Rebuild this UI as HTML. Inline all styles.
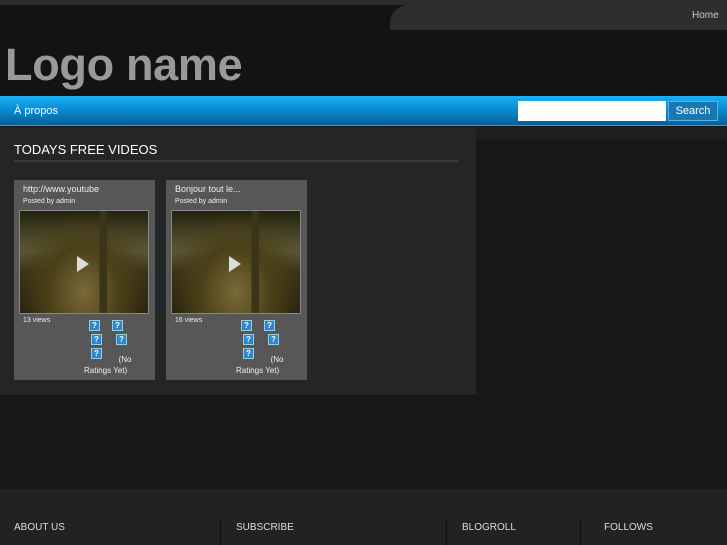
<!DOCTYPE html><html><head><meta charset="utf-8"><style>
*{margin:0;padding:0;box-sizing:border-box}
body{width:727px;height:545px;overflow:hidden;background:#181818;font-family:"Liberation Sans",sans-serif;position:relative}
.a{position:absolute}
.q{position:absolute;width:11px;height:11px;background:#2f86d0;border:1px solid #9cd;color:#fff;font-size:8px;font-weight:bold;text-align:center;line-height:9px}
.img{position:absolute;width:130px;height:104px;border:1px solid #888;background:
linear-gradient(90deg,transparent 0,transparent 62%,#3a3418 62%,#3a3418 68%,transparent 68%),
radial-gradient(ellipse at 50% 80%,#7a6a38 0,#4a4018 40%,transparent 70%),
linear-gradient(#22220e 0,#4a4628 25%,#5a5430 40%,#3a3418 60%,#2a2410 100%)}
.play{position:absolute;left:57px;top:45px;width:0;height:0;border-left:12px solid #ddd;border-top:8px solid transparent;border-bottom:8px solid transparent}
.card{position:absolute;top:180px;width:141px;height:200px;background:#575757;color:#eee}
</style></head><body>
<div class="a" style="left:0;top:0;width:727px;height:5px;background:#2c2c2c"></div>
<div class="a" style="left:0;top:5px;width:727px;height:91px;background:#131313"></div>
<div class="a" style="left:390px;top:5px;width:337px;height:25px;background:#2e2e2e;border-top-left-radius:18px"></div>
<div class="a" style="left:692px;top:10px;font-size:10px;color:#ccc">Home</div>
<div class="a" style="left:5px;top:39px;font-size:45px;font-weight:bold;color:#999;letter-spacing:-0.3px">Logo name</div>
<div class="a" style="left:0;top:96px;width:727px;height:30px;background:linear-gradient(#1ab0f5,#0a88d0 50%,#065f98);border-bottom:1px solid #2aa0e0"></div>
<div class="a" style="left:14px;top:105px;font-size:11px;color:#fff">À propos</div>
<div class="a" style="left:518px;top:101px;width:148px;height:20px;background:#fff"></div>
<div class="a" style="left:668px;top:101px;width:50px;height:20px;background:#1a78b0;border:1px solid #5ab0e0;color:#fff;font-size:11px;text-align:center;line-height:18px">Search</div>
<div class="a" style="left:0;top:127px;width:476px;height:268px;background:#242526"></div>
<div class="a" style="left:476px;top:127px;width:251px;height:13px;background:#1e1e1e"></div>
<div class="a" style="left:14px;top:142px;font-size:13px;color:#fff">TODAYS FREE VIDEOS</div>
<div class="a" style="left:14px;top:160px;width:445px;height:2px;background:#3a3a3a"></div>
<div class="card" style="left:14px">
<div class="a" style="left:9px;top:4px;font-size:9px">http://www.youtube</div>
<div class="a" style="left:9px;top:18px;font-size:7px">Posted by admin</div>
<div class="img" style="left:5px;top:30px"><div class="play"></div></div>
<div class="a" style="left:9px;top:137px;font-size:7px">13 views</div>
<div class="q" style="left:75px;top:140px">?</div><div class="q" style="left:98px;top:140px">?</div>
<div class="q" style="left:77px;top:154px">?</div><div class="q" style="left:102px;top:154px">?</div>
<div class="q" style="left:77px;top:168px">?</div>
<div class="a" style="left:70px;top:174px;width:60px;font-size:8px;line-height:12px;text-align:center;padding-left:22px">(No</div>
<div class="a" style="left:70px;top:186px;font-size:8px">Ratings Yet)</div>
</div>
<div class="card" style="left:166px">
<div class="a" style="left:9px;top:4px;font-size:9px">Bonjour tout le...</div>
<div class="a" style="left:9px;top:18px;font-size:7px">Posted by admin</div>
<div class="img" style="left:5px;top:30px"><div class="play"></div></div>
<div class="a" style="left:9px;top:137px;font-size:7px">16 views</div>
<div class="q" style="left:75px;top:140px">?</div><div class="q" style="left:98px;top:140px">?</div>
<div class="q" style="left:77px;top:154px">?</div><div class="q" style="left:102px;top:154px">?</div>
<div class="q" style="left:77px;top:168px">?</div>
<div class="a" style="left:70px;top:174px;width:60px;font-size:8px;line-height:12px;text-align:center;padding-left:22px">(No</div>
<div class="a" style="left:70px;top:186px;font-size:8px">Ratings Yet)</div>
</div>
<div class="a" style="left:0;top:489px;width:727px;height:56px;background:#222"></div>
<div class="a" style="left:220px;top:520px;width:1px;height:25px;background:#111"></div>
<div class="a" style="left:446px;top:520px;width:1px;height:25px;background:#111"></div>
<div class="a" style="left:580px;top:520px;width:1px;height:25px;background:#111"></div>
<div class="a" style="left:14px;top:522px;font-size:10px;color:#ddd">ABOUT US</div>
<div class="a" style="left:236px;top:522px;font-size:10px;color:#ddd">SUBSCRIBE</div>
<div class="a" style="left:462px;top:522px;font-size:10px;color:#ddd">BLOGROLL</div>
<div class="a" style="left:604px;top:522px;font-size:10px;color:#ddd">FOLLOWS</div>
</body></html>
